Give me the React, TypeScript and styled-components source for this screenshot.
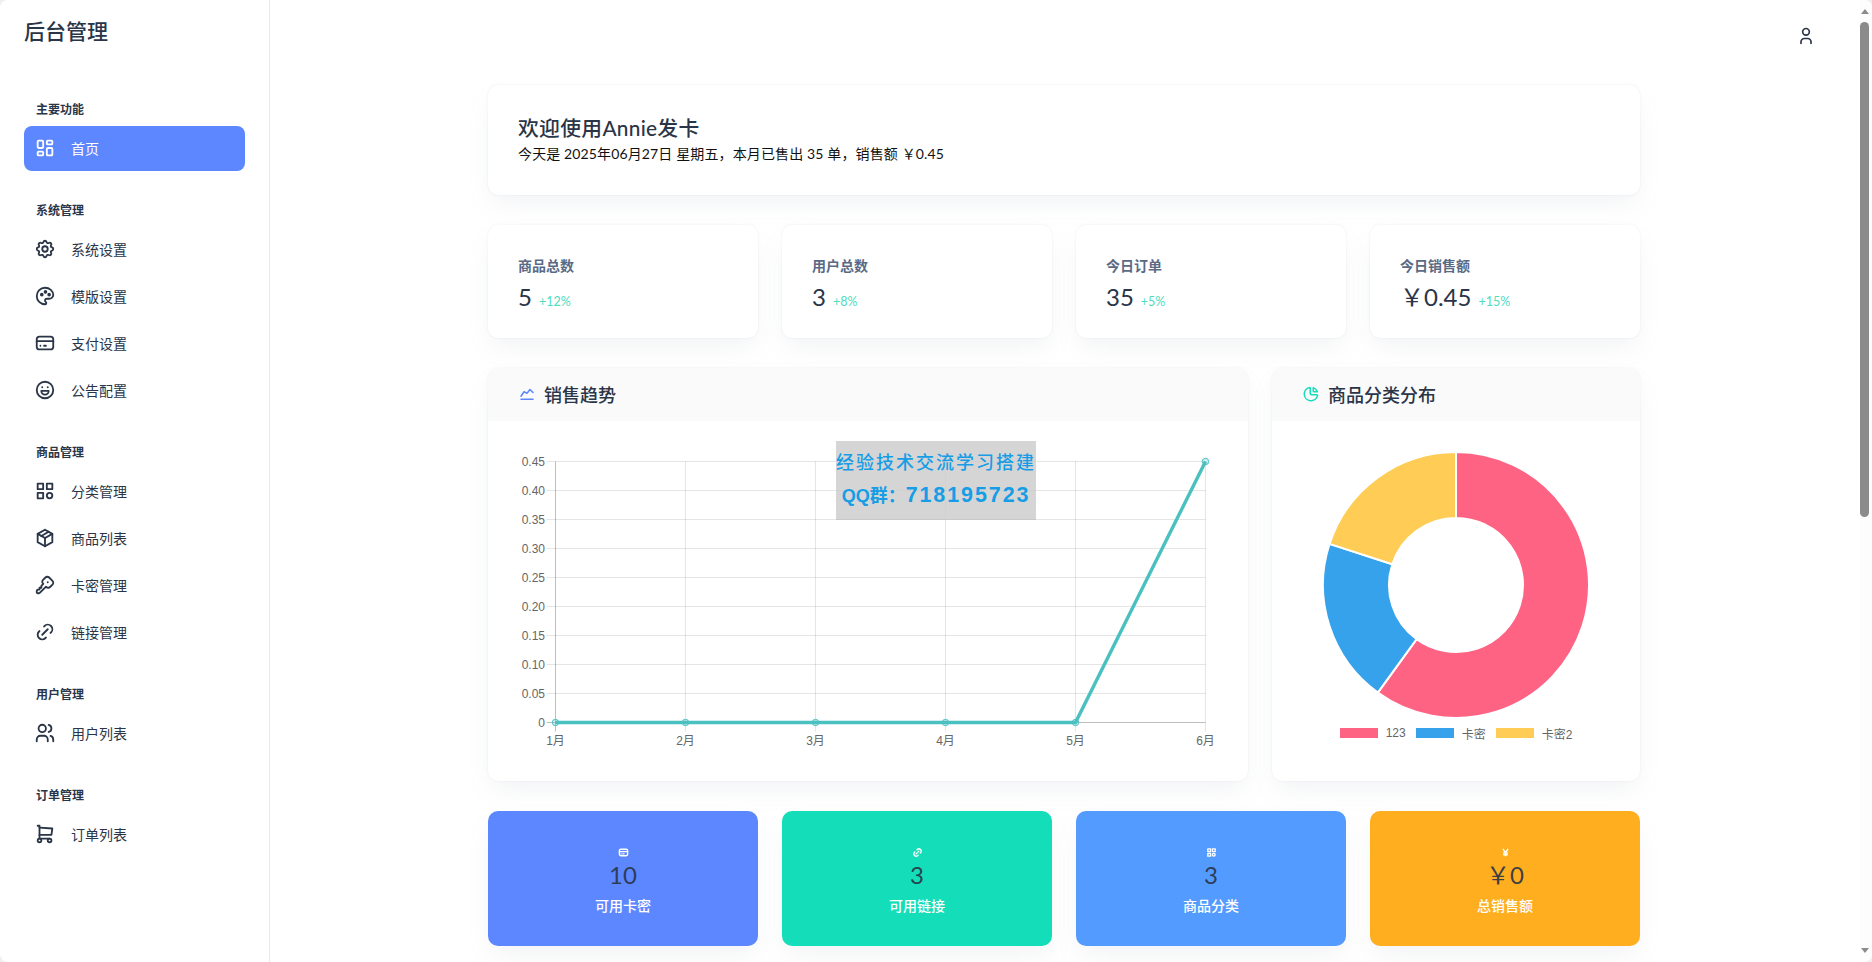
import * as React from "react";
import styled, { createGlobalStyle } from "styled-components";
import {
  TbCategory,
  TbChartLine,
  TbChartPie,
  TbCreditCard,
  TbCurrencyYen,
  TbKey,
  TbLayoutDashboard,
  TbLink,
  TbMoodHappy,
  TbPackage,
  TbPalette,
  TbSettings,
  TbShoppingCart,
  TbUser,
  TbUsers,
} from "react-icons/tb";

const GlobalStyle = createGlobalStyle`
  html, body {
    margin: 0;
    height: 100%;
    overflow: hidden;
    background: #efefef;
  }
  body {
    font-family: Lato, "Noto Sans CJK SC", sans-serif;
    color: #2a3547;
  }
`;

const Layout = styled.div`
  display: flex;
  height: 100vh;
  overflow: hidden;
  background: #fff;
  border-radius: 8px;
`;

const Sidebar = styled.aside`
  flex: 0 0 270px;
  box-sizing: border-box;
  padding: 0 24px;
  border-right: 1px solid #e8e8ea;
`;

const Logo = styled.div`
  height: 62px;
  line-height: 62px;
  font-size: 21px;
  font-weight: 500;
  margin-bottom: 38px;
`;

const NavSection = styled.div`
  margin-bottom: 30px;
`;

const NavTitle = styled.div`
  height: 20px;
  line-height: 20px;
  padding-left: 12px;
  margin-bottom: 6px;
  font-size: 12px;
  font-weight: 700;
`;

const NavList = styled.div`
  display: flex;
  flex-direction: column;
  gap: 2px;
`;

const NavItem = styled.div<{ $active?: boolean }>`
  display: flex;
  align-items: center;
  gap: 15px;
  height: 45px;
  width: 221px;
  box-sizing: border-box;
  padding: 0 0 2px 10px;
  border-radius: 8px;
  font-size: 14px;
  color: ${(p) => (p.$active ? "#fff" : "#2a3547")};
  background: ${(p) => (p.$active ? "#5d87ff" : "transparent")};
`;

const Main = styled.main`
  flex: 1;
  min-width: 0;
`;

const Topbar = styled.header`
  display: flex;
  justify-content: flex-end;
  align-items: center;
  height: 70px;
  padding: 2px 44px 0 0;
  box-sizing: border-box;
`;

const Content = styled.div`
  width: 1152px;
  margin: 15px auto 0;
  position: relative;
  left: -1px;
  display: flex;
  flex-direction: column;
  gap: 30px;
`;

const Card = styled.section`
  position: relative;
  background: #fff;
  border-radius: 10px;
  box-shadow: 0 0 2px rgba(145, 158, 171, 0.2),
    0 12px 24px -4px rgba(145, 158, 171, 0.12);
`;

const Welcome = styled(Card)`
  padding: 29px 30px 0;
  height: 110px;
  box-sizing: border-box;
`;

const WelcomeTitle = styled.h1`
  margin: 0;
  font-size: 20.8px;
  font-weight: 500;
  line-height: 28px;
  letter-spacing: 0.3px;
`;

const WelcomeText = styled.p`
  margin: 0;
  font-size: 14px;
  line-height: 24px;
  letter-spacing: 0.13px;
  color: #111;
`;

const FourGrid = styled.div`
  display: grid;
  grid-template-columns: repeat(4, 1fr);
  gap: 24px;
`;

const StatCard = styled(Card)`
  height: 113px;
  box-sizing: border-box;
  padding: 30px;
`;

const StatLabel = styled.div`
  font-size: 14px;
  font-weight: 600;
  line-height: 21px;
  color: #5a6a85;
`;

const StatValue = styled.div`
  display: flex;
  align-items: baseline;
  gap: 7px;
  margin-top: 6px;
  font-size: 24px;
  line-height: 30px;
`;

const StatDelta = styled.span`
  font-size: 12.5px;
  color: #4fdcbd;
`;

const ChartGrid = styled.div`
  display: grid;
  grid-template-columns: repeat(3, 1fr);
  gap: 24px;
`;

const ChartCard = styled(Card)<{ $wide?: boolean }>`
  grid-column: span ${(p) => (p.$wide ? 2 : 1)};
  overflow: hidden;
`;

const ChartHead = styled.div`
  display: flex;
  align-items: center;
  gap: 8px;
  height: 53px;
  box-sizing: border-box;
  padding: 0 30px 2px;
  background: #fafafa;
  font-size: 18px;
  font-weight: 500;
`;

const ChartBody = styled.div`
  height: 300px;
  padding: 30px;
`;

const ChartSvg = styled.svg`
  display: block;
  font-family: "Liberation Sans", "Noto Sans CJK SC", sans-serif;
  font-size: 12px;
`;

const Legend = styled.div`
  display: flex;
  justify-content: center;
  gap: 10px;
  height: 20px;
  align-items: center;
  font-family: "Liberation Sans", "Noto Sans CJK SC", sans-serif;
  font-size: 12px;
  color: #666;
`;

const LegendItem = styled.div`
  display: flex;
  align-items: center;
  gap: 8px;
`;

const Swatch = styled.span<{ $color: string }>`
  width: 38px;
  height: 10px;
  background: ${(p) => p.$color};
`;

const Watermark = styled.div`
  position: absolute;
  left: 348px;
  top: 73px;
  width: 200px;
  height: 79px;
  box-sizing: border-box;
  background: rgba(205, 205, 205, 0.84);
  border-bottom: 1px solid #c8c8c8;
  color: #169de6;
  text-align: center;
  font-family: "Liberation Sans", "Noto Sans CJK SC", sans-serif;
`;

const WatermarkTop = styled.div`
  margin-top: 10px;
  font-size: 18px;
  font-weight: 500;
  line-height: 24px;
  letter-spacing: 2px;
  white-space: nowrap;
`;

const WatermarkBottom = styled.div`
  margin-top: 6px;
  font-size: 18px;
  font-weight: 700;
  line-height: 28px;
  white-space: nowrap;
`;

const WatermarkNumber = styled.span`
  font-size: 21.5px;
  letter-spacing: 1.9px;
`;

const ActionCard = styled.div<{ $color: string }>`
  height: 135px;
  box-sizing: border-box;
  padding: 29px 30px 0;
  border-radius: 10px;
  background: ${(p) => p.$color};
  text-align: center;
  box-shadow: 0 12px 24px -4px rgba(145, 158, 171, 0.12);
`;

const ActionIcon = styled.div`
  display: flex;
  justify-content: center;
  align-items: center;
  height: 24px;
  color: #fff;
`;

const ActionValue = styled.div`
  font-size: 24px;
  line-height: 22px;
  color: rgba(42, 53, 71, 0.92);
`;

const ActionLabel = styled.div`
  margin-top: 9px;
  font-size: 14px;
  font-weight: 500;
  line-height: 21px;
  color: #fff;
`;

const ScrollRail = styled.div`
  flex: 0 0 12px;
  display: flex;
  flex-direction: column;
  align-items: flex-start;
  background: #fdfdfd;
`;

const ScrollArrow = styled.span<{ $down?: boolean }>`
  margin: ${(p) => (p.$down ? "auto 0 9px 1px" : "9px 0 3px 1px")};
  border-left: 4px solid transparent;
  border-right: 4px solid transparent;
  border-bottom: ${(p) => (p.$down ? "0" : "5px solid #8b8b8b")};
  border-top: ${(p) => (p.$down ? "5px solid #8b8b8b" : "0")};
`;

const ScrollThumb = styled.span`
  width: 9px;
  height: 495px;
  margin-top: 5px;
  border-radius: 5px;
  background: #8b8b8b;
`;

const navGroups = [
  { title: "主要功能", items: [{ label: "首页", icon: TbLayoutDashboard, active: true }] },
  {
    title: "系统管理",
    items: [
      { label: "系统设置", icon: TbSettings },
      { label: "模版设置", icon: TbPalette },
      { label: "支付设置", icon: TbCreditCard },
      { label: "公告配置", icon: TbMoodHappy },
    ],
  },
  {
    title: "商品管理",
    items: [
      { label: "分类管理", icon: TbCategory },
      { label: "商品列表", icon: TbPackage },
      { label: "卡密管理", icon: TbKey },
      { label: "链接管理", icon: TbLink },
    ],
  },
  { title: "用户管理", items: [{ label: "用户列表", icon: TbUsers }] },
  { title: "订单管理", items: [{ label: "订单列表", icon: TbShoppingCart }] },
];

const stats = [
  { label: "商品总数", value: "5", delta: "+12%" },
  { label: "用户总数", value: "3", delta: "+8%" },
  { label: "今日订单", value: "35", delta: "+5%" },
  { label: "今日销售额", value: "￥0.45", delta: "+15%" },
];

const actions = [
  { label: "可用卡密", value: "10", color: "#5d87ff", icon: TbCreditCard },
  { label: "可用链接", value: "3", color: "#13deb9", icon: TbLink },
  { label: "商品分类", value: "3", color: "#539bff", icon: TbCategory },
  { label: "总销售额", value: "￥0", color: "#ffae1f", icon: TbCurrencyYen },
];

const yTicks = ["0.45", "0.40", "0.35", "0.30", "0.25", "0.20", "0.15", "0.10", "0.05", "0"];
const months = ["1月", "2月", "3月", "4月", "5月", "6月"];
const sales = [0, 0, 0, 0, 0, 0.45];

const PLOT_LEFT = 37.5;
const PLOT_TOP = 10.5;
const STEP_X = 130;
const STEP_Y = 29;

const SalesChart = () => {
  const bottom = PLOT_TOP + STEP_Y * 9;
  const right = PLOT_LEFT + STEP_X * 5;
  const points = sales.map((v, i) => [PLOT_LEFT + i * STEP_X, bottom - (v / 0.45) * (STEP_Y * 9)]);
  return (
    <ChartSvg width="700" height="300" viewBox="0 0 700 300">
      {yTicks.map((t, i) => {
        const y = PLOT_TOP + i * STEP_Y;
        return (
          <g key={t}>
            <line x1={PLOT_LEFT - 9} x2={right} y1={y} y2={y} stroke={t === "0" ? "rgba(0,0,0,.25)" : "rgba(0,0,0,.1)"} />
            <text x="27" y={y + 4} textAnchor="end" fill="#666">
              {t}
            </text>
          </g>
        );
      })}
      {months.map((m, i) => {
        const x = PLOT_LEFT + i * STEP_X;
        return (
          <g key={m}>
            <line x1={x} x2={x} y1={PLOT_TOP} y2={bottom + 9} stroke={i === 0 ? "rgba(0,0,0,.25)" : "rgba(0,0,0,.1)"} />
            <text x={x} y={bottom + 22} textAnchor="middle" fill="#666">
              {m}
            </text>
          </g>
        );
      })}
      <polyline points={points.map((p) => p.join(",")).join(" ")} fill="none" stroke="#4bc0c0" strokeWidth="3.4" />
      {points.map(([x, y]) => (
        <circle key={x} cx={x} cy={y} r="3.2" fill="rgba(75,192,192,.25)" stroke="#4bc0c0" />
      ))}
    </ChartSvg>
  );
};

const slices = [
  { label: "123", share: 0.6, color: "#ff6384" },
  { label: "卡密", share: 0.2, color: "#36a2eb" },
  { label: "卡密2", share: 0.2, color: "#ffcd56" },
];

function slicePath(start: number, end: number) {
  const cx = 154;
  const cy = 134;
  const outer = 133;
  const inner = 67;
  const at = (r: number, turn: number) => {
    const a = turn * 2 * Math.PI - Math.PI / 2;
    return `${(cx + r * Math.cos(a)).toFixed(2)} ${(cy + r * Math.sin(a)).toFixed(2)}`;
  };
  const large = end - start > 0.5 ? 1 : 0;
  return `M${at(outer, start)}A${outer} ${outer} 0 ${large} 1 ${at(outer, end)}L${at(inner, end)}A${inner} ${inner} 0 ${large} 0 ${at(inner, start)}Z`;
}

const CategoryChart = () => {
  let turn = 0;
  return (
    <>
      <ChartSvg width="308" height="272" viewBox="0 0 308 272">
        {slices.map((s) => {
          const d = slicePath(turn, turn + s.share);
          turn += s.share;
          return <path key={s.label} d={d} fill={s.color} stroke="#fff" strokeWidth="2" />;
        })}
      </ChartSvg>
      <Legend>
        {slices.map((s) => (
          <LegendItem key={s.label}>
            <Swatch $color={s.color} />
            {s.label}
          </LegendItem>
        ))}
      </Legend>
    </>
  );
};

const App: React.FC = () => {
  return (
    <Layout>
      <GlobalStyle />
      <Sidebar>
        <Logo>后台管理</Logo>
        {navGroups.map((group) => (
          <NavSection key={group.title}>
            <NavTitle>{group.title}</NavTitle>
            <NavList>
              {group.items.map((item) => (
                <NavItem key={item.label} $active={"active" in item}>
                  <item.icon size={22} />
                  {item.label}
                </NavItem>
              ))}
            </NavList>
          </NavSection>
        ))}
      </Sidebar>
      <Main>
        <Topbar>
          <TbUser size={20} />
        </Topbar>
        <Content>
          <Welcome>
            <WelcomeTitle>欢迎使用Annie发卡</WelcomeTitle>
            <WelcomeText>今天是 2025年06月27日 星期五，本月已售出 35 单，销售额 ￥0.45</WelcomeText>
          </Welcome>
          <FourGrid>
            {stats.map((s) => (
              <StatCard key={s.label}>
                <StatLabel>{s.label}</StatLabel>
                <StatValue>
                  {s.value}
                  <StatDelta>{s.delta}</StatDelta>
                </StatValue>
              </StatCard>
            ))}
          </FourGrid>
          <ChartGrid>
            <ChartCard $wide>
              <ChartHead>
                <TbChartLine size={18} color="#5d87ff" />
                销售趋势
              </ChartHead>
              <ChartBody>
                <SalesChart />
              </ChartBody>
              <Watermark>
                <WatermarkTop>经验技术交流学习搭建</WatermarkTop>
                <WatermarkBottom>
                  QQ群：<WatermarkNumber>718195723</WatermarkNumber>
                </WatermarkBottom>
              </Watermark>
            </ChartCard>
            <ChartCard>
              <ChartHead>
                <TbChartPie size={18} color="#13deb9" />
                商品分类分布
              </ChartHead>
              <ChartBody>
                <CategoryChart />
              </ChartBody>
            </ChartCard>
          </ChartGrid>
          <FourGrid>
            {actions.map((a) => (
              <ActionCard key={a.label} $color={a.color}>
                <ActionIcon>
                  <a.icon size={11} strokeWidth={3} />
                </ActionIcon>
                <ActionValue>{a.value}</ActionValue>
                <ActionLabel>{a.label}</ActionLabel>
              </ActionCard>
            ))}
          </FourGrid>
        </Content>
      </Main>
      <ScrollRail>
        <ScrollArrow />
        <ScrollThumb />
        <ScrollArrow $down />
      </ScrollRail>
    </Layout>
  );
};

export default App;
